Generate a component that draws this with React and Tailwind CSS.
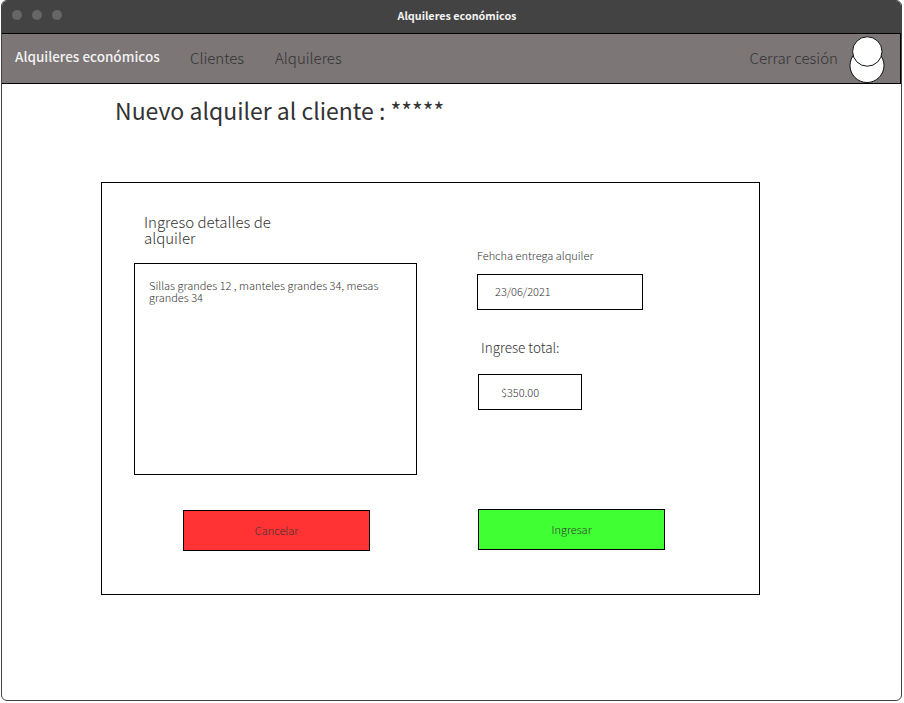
const font = "font-['Noto_Sans_CJK_SC','Open_Sans',sans-serif]";

function TitleBar() {
  return (
    <header className="relative -mx-px -mt-px h-[33px] bg-[#434343]">
      <div className="absolute left-[11px] top-[10px] flex gap-[10px]">
        <span className="size-[10px] rounded-full bg-[#666]" />
        <span className="size-[10px] rounded-full bg-[#666]" />
        <span className="size-[10px] rounded-full bg-[#666]" />
      </div>
      <p className="pl-[11px] text-center text-[10.8px] leading-[31px] font-bold text-[#f2f2f2]">
        Alquileres económicos
      </p>
    </header>
  );
}

function Avatar() {
  return (
    <svg className="mt-[2px] ml-[11px] block" width="36" height="48" viewBox="0 0 36 48" fill="#fff" stroke="#111" strokeWidth="1">
      <circle cx="18" cy="29.5" r="17" />
      <circle cx="18.3" cy="15.5" r="14.7" />
    </svg>
  );
}

function NavBar() {
  return (
    <nav className="-ml-px flex h-[51px] w-[900px] items-start border border-black bg-[#7c7676] text-[15px] font-light leading-[24px] text-[#333]">
      <strong className="mt-[10px] ml-[13px] w-[175px] text-[13.5px] font-medium text-[#f2f2f2]">
        Alquileres económicos
      </strong>
      <a className="mt-[12px] w-[85px]">Clientes</a>
      <a className="mt-[12px]">Alquileres</a>
      <a className="mt-[12px] ml-auto">Cerrar cesión</a>
      <div className="w-[62px]"><Avatar /></div>
    </nav>
  );
}

export default function App() {
  return (
    <div className={`h-[703px] w-[904px] overflow-hidden bg-white pl-px text-[#333] ${font}`}>
      <div className="h-[701px] w-[901px] overflow-hidden rounded-[6px] border border-[#434343] bg-white">
        <TitleBar />
        <NavBar />
        <h1 className="mt-[9px] ml-[113px] text-[23px] leading-[34px] font-normal whitespace-nowrap">
          Nuevo alquiler al cliente : *****
        </h1>
        <main className="mt-[55px] ml-[99px] flex h-[413px] w-[659px] border border-black font-light">
          <section className="w-[343px] pl-[32px]">
            <h2 className="mt-[31px] ml-[10px] w-[160px] text-[15px] leading-[16px]">
              Ingreso detalles de alquiler
            </h2>
            <div className="mt-[17px] h-[212px] w-[283px] border border-black pt-[15px] pl-[14px] text-[11px] leading-[12px]">
              Sillas grandes 12 , manteles grandes 34, mesas
              <br />
              grandes 34
            </div>
            <button className="mt-[35px] ml-[49px] block h-[41px] w-[187px] border border-black bg-[#ff3333] text-[11px]">
              Cancelar
            </button>
          </section>
          <section className="pt-[64px] pl-[32px]">
            <label className="block text-[11px] leading-[16px]">Fehcha entrega alquiler</label>
            <div className="mt-[11px] h-[36px] w-[166px] border border-black pl-[17px] text-[11px] leading-[32px]">
              23/06/2021
            </div>
            <label className="mt-[27px] ml-[4px] block text-[13.5px] leading-[20px]">Ingrese total:</label>
            <div className="mt-[17px] ml-px h-[36px] w-[104px] border border-black pl-[22px] text-[11px] leading-[35px]">
              $350.00
            </div>
            <button className="mt-[99px] ml-px block h-[41px] w-[187px] border border-black bg-[#40ff33] text-[11px]">
              Ingresar
            </button>
          </section>
        </main>
      </div>
    </div>
  );
}
